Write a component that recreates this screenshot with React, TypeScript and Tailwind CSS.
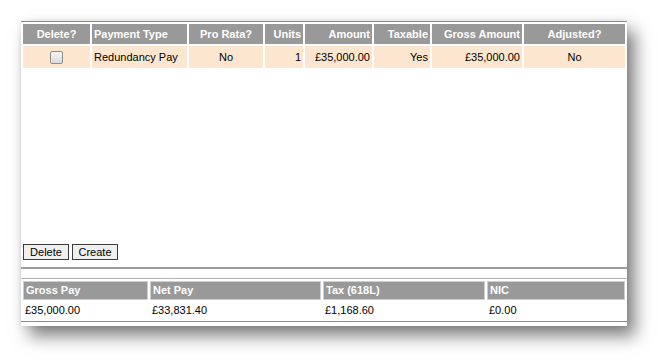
import React from "react";

const font = { fontFamily: '"Liberation Sans", Arial, sans-serif' };

function Checkbox() {
  return (
    <div className="mx-auto h-[13px] w-[13px] rounded-[2px] border border-[#8e8f8f] bg-gradient-to-b from-[#f4f4f4] to-[#dcdcdc]" />
  );
}

export default function App() {
  const th = "h-[20px] bg-[#999999] text-white font-bold text-[11px] px-[2px] p-0";
  const td = "h-[22px] bg-[#fde6cf] text-black text-[11px] px-[2px] p-0";
  const bth = "h-[19px] bg-[#999999] text-white font-bold text-[11px] px-[2px] text-left border border-[#cfcfcf]";
  const btd = "h-[17px] text-black text-[11px] px-[2px] text-left";
  return (
    <div className="w-[671px] h-[362px] bg-white pt-[21px] pl-[21px]" style={font}>
      <div className="w-[606px] h-[305px] bg-white border-t border-[#8a8a8a] shadow-[8px_10px_16px_rgba(0,0,0,0.5),0_0_6px_rgba(0,0,0,0.1)] flex flex-col">
        <div className="h-[222px]">
          <table className="table-fixed w-[606px] border-separate border-spacing-[2px]">
            <colgroup>
              <col className="w-[67px]" />
              <col className="w-[95px]" />
              <col className="w-[74px]" />
              <col className="w-[38px]" />
              <col className="w-[67px]" />
              <col className="w-[56px]" />
              <col className="w-[90px]" />
              <col className="w-[101px]" />
            </colgroup>
            <thead>
              <tr>
                <th className={`${th} text-center`}>Delete?</th>
                <th className={`${th} text-left`}>Payment Type</th>
                <th className={`${th} text-center`}>Pro Rata?</th>
                <th className={`${th} text-right`}>Units</th>
                <th className={`${th} text-right`}>Amount</th>
                <th className={`${th} text-right`}>Taxable</th>
                <th className={`${th} text-right`}>Gross Amount</th>
                <th className={`${th} text-center`}>Adjusted?</th>
              </tr>
            </thead>
            <tbody>
              <tr>
                <td className={`${td} text-center`}>
                  <Checkbox />
                </td>
                <td className={`${td} text-left`}>Redundancy Pay</td>
                <td className={`${td} text-center`}>No</td>
                <td className={`${td} text-right`}>1</td>
                <td className={`${td} text-right`}>£35,000.00</td>
                <td className={`${td} text-right`}>Yes</td>
                <td className={`${td} text-right`}>£35,000.00</td>
                <td className={`${td} text-center`}>No</td>
              </tr>
            </tbody>
          </table>
        </div>
        <div className="flex gap-[3px] pl-[2px] h-[16px]">
          <button className="w-[46px] h-[16px] border border-[#3c3c3c] bg-[#f0f0f0] text-[11px] leading-[14px] text-black">
            Delete
          </button>
          <button className="w-[46px] h-[16px] border border-[#3c3c3c] bg-[#f0f0f0] text-[11px] leading-[14px] text-black">
            Create
          </button>
        </div>
        <div className="mt-[7px] border-t-2 border-[#9c9c9c]" />
        <div className="mt-[9px] border-t border-[#b4b4b4]" />
        <table className="table-fixed w-[606px] border-separate border-spacing-[2px]">
          <colgroup>
            <col className="w-[125px]" />
            <col className="w-[171px]" />
            <col className="w-[162px]" />
            <col className="w-[138px]" />
          </colgroup>
          <thead>
            <tr>
              <th className={bth}>Gross Pay</th>
              <th className={bth}>Net Pay</th>
              <th className={bth}>Tax (618L)</th>
              <th className={bth}>NIC</th>
            </tr>
          </thead>
          <tbody>
            <tr>
              <td className={btd}>£35,000.00</td>
              <td className={btd}>£33,831.40</td>
              <td className={btd}>£1,168.60</td>
              <td className={btd}>£0.00</td>
            </tr>
          </tbody>
        </table>
        <div className="border-t border-[#8a8a8a]" />
      </div>
    </div>
  );
}
